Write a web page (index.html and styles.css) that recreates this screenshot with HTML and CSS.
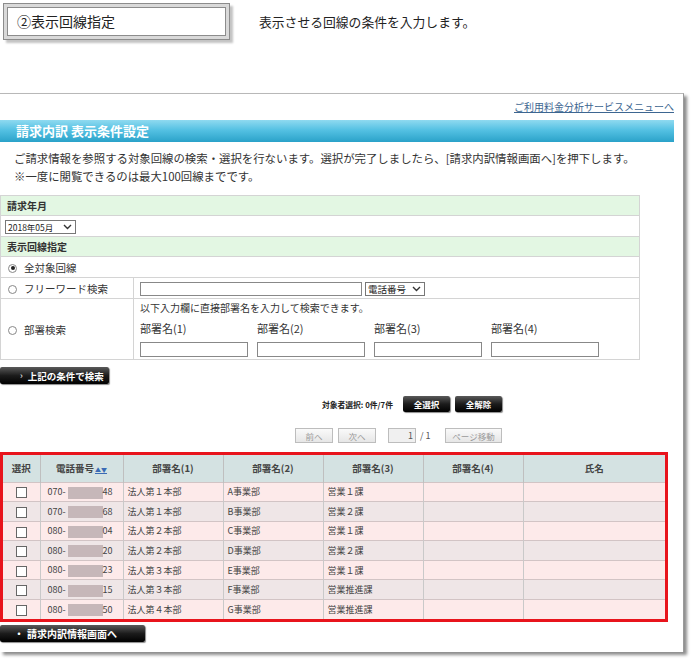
FILE: index.html
```html
<!DOCTYPE html>
<html lang="ja">
<head>
<meta charset="utf-8">
<title>表示回線指定</title>
<link rel="stylesheet" href="styles.css">
</head>
<body>
<div class="top">
  <div class="step-box"><div class="step-inner">②表示回線指定</div></div>
  <p class="step-desc">表示させる回線の条件を入力します。</p>
</div>

<div class="panel">
  <div class="menu-link"><a href="#">ご利用料金分析サービスメニューへ</a></div>
  <h1 class="title-bar">請求内訳 表示条件設定</h1>
  <p class="desc">ご請求情報を参照する対象回線の検索・選択を行ないます。選択が完了しましたら、[請求内訳情報画面へ]を押下します。<br>※一度に閲覧できるのは最大100回線までです。</p>

  <table class="form">
    <tr class="f-head"><td colspan="2">請求年月</td></tr>
    <tr class="f-row"><td colspan="2" class="pad-sel"><span class="sel sel-month">2018年05月<svg class="chev" width="9" height="6" viewBox="0 0 9 6"><path d="M1 1 L4.5 4.5 L8 1" fill="none" stroke="#333" stroke-width="1.4"/></svg></span></td></tr>
    <tr class="f-head"><td colspan="2">表示回線指定</td></tr>
    <tr class="f-row"><td colspan="2" class="opt"><span class="radio on"></span>全対象回線</td></tr>
    <tr class="f-row">
      <td class="opt c1"><span class="radio"></span>フリーワード検索</td>
      <td class="c2"><span class="txt wide"></span><span class="sel sel-kind">電話番号<svg class="chev" width="9" height="6" viewBox="0 0 9 6"><path d="M1 1 L4.5 4.5 L8 1" fill="none" stroke="#333" stroke-width="1.4"/></svg></span></td>
    </tr>
    <tr class="f-row dept">
      <td class="opt c1"><span class="radio"></span>部署検索</td>
      <td class="c2">
        <div class="note">以下入力欄に直接部署名を入力して検索できます。</div>
        <div class="dept-grid">
          <div class="dept-item"><span class="lbl">部署名(1)</span><span class="txt"></span></div>
          <div class="dept-item"><span class="lbl">部署名(2)</span><span class="txt"></span></div>
          <div class="dept-item"><span class="lbl">部署名(3)</span><span class="txt"></span></div>
          <div class="dept-item"><span class="lbl">部署名(4)</span><span class="txt"></span></div>
        </div>
      </td>
    </tr>
  </table>

  <div class="search-row"><span class="btn-black btn-search"><span class="arr">›</span>上記の条件で検索</span></div>

  <div class="ctrl">
    <div class="ctrl-line sel-line">
      <span class="count">対象者選択: 0件/7件</span>
      <span class="btn-black btn-sm">全選択</span>
      <span class="btn-black btn-sm">全解除</span>
    </div>
    <div class="ctrl-line pager">
      <span class="btn-gray b-prev">前へ</span>
      <span class="btn-gray b-next">次へ</span>
      <span class="page-input">1</span>
      <span class="page-total">/ 1</span>
      <span class="btn-gray b-move">ページ移動</span>
    </div>
  </div>

  <div class="result-wrap">
    <table class="result">
      <colgroup><col class="w-sel"><col class="w-tel"><col class="w-d"><col class="w-d"><col class="w-d"><col class="w-d"><col class="w-name"></colgroup>
      <tr class="r-head"><th>選択</th><th>電話番号<span class="sort">▲▼</span></th><th>部署名(1)</th><th>部署名(2)</th><th>部署名(3)</th><th>部署名(4)</th><th>氏名</th></tr>
      <tr><td class="ck"><span class="box"></span></td><td class="tel">070-<span class="mask"></span>48</td><td>法人第１本部</td><td>A事業部</td><td>営業１課</td><td></td><td></td></tr>
      <tr><td class="ck"><span class="box"></span></td><td class="tel">070-<span class="mask"></span>68</td><td>法人第１本部</td><td>B事業部</td><td>営業２課</td><td></td><td></td></tr>
      <tr><td class="ck"><span class="box"></span></td><td class="tel">080-<span class="mask"></span>04</td><td>法人第２本部</td><td>C事業部</td><td>営業１課</td><td></td><td></td></tr>
      <tr><td class="ck"><span class="box"></span></td><td class="tel">080-<span class="mask"></span>20</td><td>法人第２本部</td><td>D事業部</td><td>営業２課</td><td></td><td></td></tr>
      <tr><td class="ck"><span class="box"></span></td><td class="tel">080-<span class="mask"></span>23</td><td>法人第３本部</td><td>E事業部</td><td>営業１課</td><td></td><td></td></tr>
      <tr><td class="ck"><span class="box"></span></td><td class="tel">080-<span class="mask"></span>15</td><td>法人第３本部</td><td>F事業部</td><td>営業推進課</td><td></td><td></td></tr>
      <tr><td class="ck"><span class="box"></span></td><td class="tel">080-<span class="mask"></span>50</td><td>法人第４本部</td><td>G事業部</td><td>営業推進課</td><td></td><td></td></tr>
    </table>
  </div>

  <div class="bottom-row"><span class="btn-black btn-detail"><span class="dot">・</span>請求内訳情報画面へ</span></div>
</div>
</body>
</html>
```

FILE: styles.css
```css
* { box-sizing: border-box; }
html, body { margin: 0; padding: 0; background: #fff; }
body {
  width: 692px;
  height: 663px;
  overflow: hidden;
  font-family: "Noto Sans CJK JP", "Noto Sans", sans-serif;
  color: #333;
}

/* top caption */
.top {
  display: flex;
  align-items: flex-start;
  padding: 3px 0 0 3px;
  height: 93px;
}
.step-box {
  width: 227px;
  height: 37px;
  border: 1px solid #8c8c8c;
  background: #d9d9d9;
  padding: 3px;
  box-shadow: 3px 3px 2px #c4c4c4;
}
.step-inner {
  height: 100%;
  background: #fff;
  border: 1px solid #8c8c8c;
  font-size: 14px;
  line-height: 27px;
  padding-left: 9px;
  color: #222;
}
.step-desc {
  margin: 11px 0 0 29px;
  font-size: 12.8px;
  line-height: 16px;
  color: #222;
}

/* panel */
.panel {
  width: 684px;
  border-top: 1px solid #b8b8b8;
  border-right: 1px solid #9a9a9a;
  box-shadow: 3px 3px 3px rgba(0,0,0,0.45);
  padding: 6px 9px 10px 0;
  background: #fff;
}
.menu-link {
  text-align: right;
  font-size: 10px;
  line-height: 14px;
  height: 14px;
}
.menu-link a { color: #3d6691; text-decoration: underline; }

.title-bar {
  margin: 6px 0 0 0;
  height: 22px;
  background: linear-gradient(#8fdaf0 0%, #55c1e3 45%, #2aa2c9 100%);
  color: #fff;
  font-size: 13px;
  font-weight: bold;
  line-height: 22px;
  padding-left: 16px;
}
.desc {
  margin: 7px 0 0 0;
  padding-left: 14px;
  font-size: 11.4px;
  line-height: 18px;
  color: #333;
  white-space: nowrap;
}

/* form table */
.form {
  margin-top: 10px;
  width: 640px;
  border-collapse: collapse;
  font-size: 10px;
}
.form td {
  border: 1px solid #d4d4d4;
  padding: 0;
}
.f-head td {
  background: #e3f7e3;
  height: 20px;
  font-weight: bold;
  padding-left: 6px;
  font-size: 10px;
  color: #333;
}
.f-row td { height: 21px; }
.pad-sel { padding-left: 4px !important; }
.opt {
  padding-left: 7px !important;
  font-size: 10.5px;
  color: #333;
}
.c1 { width: 133px; }
.c2 { padding-left: 6px !important; }
.radio {
  display: inline-block;
  width: 9px;
  height: 9px;
  border: 1px solid #888;
  border-radius: 50%;
  margin-right: 7px;
  vertical-align: -1px;
  background: #fff;
  position: relative;
}
.radio.on::after {
  content: "";
  position: absolute;
  left: 1.5px;
  top: 1.5px;
  width: 4px;
  height: 4px;
  border-radius: 50%;
  background: #222;
}
.sel {
  display: inline-flex;
  align-items: center;
  justify-content: space-between;
  height: 14px;
  border: 1px solid #777;
  background: #fff;
  font-size: 8.5px;
  padding: 0 3px 0 2px;
  vertical-align: middle;
  color: #222;
}
.sel-month { width: 71px; }
.sel-kind { width: 60px; margin-left: 3px; font-size: 9.5px; }
.chev { flex: none; }
.txt {
  display: inline-block;
  height: 14px;
  border: 1px solid #888;
  background: #fff;
  vertical-align: middle;
}
.txt.wide { width: 222px; }
.dept td { height: 61px; }
.note {
  font-size: 10px;
  line-height: 12px;
  margin-top: 0;
}
.dept-grid {
  display: flex;
  gap: 9px;
  margin-top: 8px;
}
.dept-item {
  display: flex;
  flex-direction: column;
  width: 108px;
}
.lbl {
  font-size: 11px;
  line-height: 13px;
  height: 14px;
}
.dept-item .txt { width: 108px; height: 15px; margin-top: 6px; }

/* black buttons */
.btn-black {
  display: inline-flex;
  align-items: center;
  justify-content: center;
  background: linear-gradient(#5a5a5a 0%, #1c1c1c 50%, #000 100%);
  color: #fff;
  font-weight: bold;
  border-radius: 2px;
  box-shadow: 1px 1px 1px #8a8a8a;
  white-space: nowrap;
}
.search-row { margin-top: 7px; height: 17px; display: flex; }
.btn-search {
  width: 109px;
  height: 17px;
  font-size: 9.5px;
  justify-content: flex-start;
  padding-left: 20px;
}
.arr { font-size: 9px; margin-right: 5px; font-weight: normal; }

.ctrl {
  width: 502px;
  display: flex;
  flex-direction: column;
  align-items: flex-end;
}
.ctrl-line { display: flex; align-items: center; }
.sel-line { margin-top: 12px; height: 16px; }
.count { font-size: 7.8px; font-weight: bold; margin-right: 5px; color: #222; }
.btn-sm { width: 47px; height: 16px; font-size: 8.5px; margin-left: 5px; }

.pager { margin-top: 16px; height: 15px; }
.btn-gray {
  display: inline-flex;
  align-items: center;
  justify-content: center;
  height: 15px;
  border: 1px solid #bdbdbd;
  background: linear-gradient(#fafafa, #e6e6e6);
  color: #9a9a9a;
  font-size: 8.5px;
}
.b-prev, .b-next { width: 38px; }
.b-next { margin-left: 5px; }
.page-input {
  width: 28px;
  height: 15px;
  border: 1px solid #bdbdbd;
  background: #f0f0f0;
  margin-left: 12px;
  font-size: 9px;
  text-align: right;
  padding-right: 2px;
  line-height: 13px;
  color: #555;
}
.page-total { font-size: 9px; color: #555; padding-left: 4px; width: 29px; }
.b-move { width: 57px; }

/* results */
.result-wrap {
  margin-top: 9px;
  width: 668px;
  border: 3px solid #e8141c;
}
.result {
  width: 100%;
  table-layout: fixed;
  border-collapse: collapse;
  font-size: 9px;
  color: #444;
}
.w-sel { width: 37px; }
.w-tel { width: 83px; }
.w-d { width: 100px; }
.w-name { width: 142px; }
.result th {
  background: #d4e2e2;
  height: 27px;
  font-weight: bold;
  font-size: 9.5px;
  color: #444;
  border-right: 1px solid #bfbfbf;
  padding: 0;
}
.result th:last-child, .result td:last-child { border-right: none; }
.sort { color: #3a6bb5; font-size: 6px; text-decoration: underline; margin-left: 1px; }
.result td {
  height: 19.6px;
  padding: 0 0 0 4px;
  border-right: 1px solid #c9c9c9;
  border-top: 1px solid #d2c4c5;
  white-space: nowrap;
  overflow: hidden;
}
.result tr:nth-child(odd) td { background: #efe6e7; }
.result tr:nth-child(even) td { background: #fdeaea; }
.result td.ck { text-align: center; padding: 0; }
.box {
  display: inline-block;
  width: 11px;
  height: 11px;
  border: 1px solid #666;
  background: #fff;
  vertical-align: middle;
}
.result td.tel { padding-left: 7px; font-size: 9px; }
.mask {
  display: inline-block;
  width: 35px;
  height: 12px;
  background: #c6b7b9;
  vertical-align: middle;
  margin-left: 2px;
}

.bottom-row { margin-top: 3px; height: 17px; display: flex; }
.btn-detail {
  width: 145px;
  height: 17px;
  font-size: 10px;
  justify-content: flex-start;
  padding-left: 14px;
}
.dot { margin-right: 3px; }
```
